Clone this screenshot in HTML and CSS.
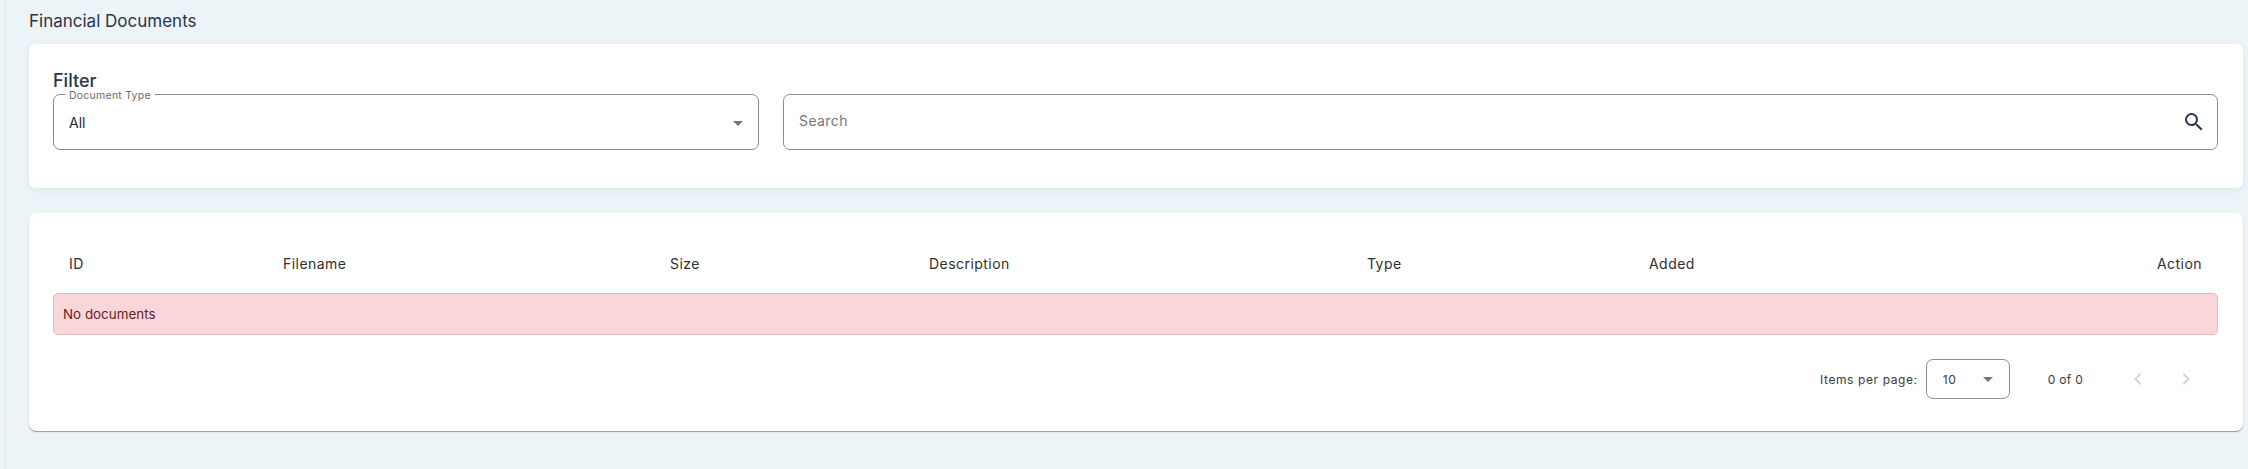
FILE: index.html
```html
<!DOCTYPE html>
<html lang="en">
<head>
<meta charset="utf-8">
<title>Financial Documents</title>
<link rel="stylesheet" href="styles.css">
</head>
<body>
<main class="page">
  <h1 class="page-title">Financial Documents</h1>
  <section class="card filter-card">
    <h2 class="filter-title">Filter</h2>
    <div class="filter-row">
      <div class="field field-type">
        <span class="field-label">Document Type</span>
        <span class="field-value">All</span>
        <span class="caret"></span>
      </div>
      <div class="field field-search">
        <span class="placeholder">Search</span>
        <svg class="search-icon" viewBox="0 0 24 24" width="24" height="24" aria-hidden="true"><path d="M15.5 14h-.79l-.28-.27A6.47 6.47 0 0 0 16 9.5 6.5 6.5 0 1 0 9.5 16c1.61 0 3.09-.59 4.23-1.57l.27.28v.79l5 4.99L20.49 19l-4.99-5zm-6 0C7.01 14 5 11.99 5 9.5S7.01 5 9.5 5 14 7.01 14 9.5 11.99 14 9.5 14z"/></svg>
      </div>
    </div>
  </section>
  <section class="card table-card">
    <div class="table-head">
      <span>ID</span>
      <span>Filename</span>
      <span>Size</span>
      <span>Description</span>
      <span>Type</span>
      <span>Added</span>
      <span class="head-action">Action</span>
    </div>
    <div class="alert">No documents</div>
    <div class="paginator">
      <span class="per-page">Items per page:</span>
      <div class="page-select"><span>10</span><span class="caret"></span></div>
      <span class="range">0 of 0</span>
      <div class="page-nav">
        <svg viewBox="0 0 24 24" width="24" height="24" aria-hidden="true"><path d="M15.41 7.41 14 6l-6 6 6 6 1.41-1.41L10.83 12z"/></svg>
        <svg viewBox="0 0 24 24" width="24" height="24" aria-hidden="true"><path d="M10 6 8.59 7.41 13.17 12l-4.58 4.59L10 18l6-6z"/></svg>
      </div>
    </div>
  </section>
</main>
</body>
</html>
```

FILE: styles.css
```css
* { box-sizing: border-box; }
html, body { margin: 0; height: 100%; }
body {
  background: #ecf4f8;
  font-family: "Inter", "Open Sans", sans-serif;
  color: #2a3547;
  overflow: hidden;
}
.page {
  height: 469px;
  margin-left: 5px;
  padding: 0 5px 0 23px;
  border-left: 1px solid #dfe5e9;
}
.page-title {
  margin: 0;
  height: 44px;
  padding-top: 10px;
  font-size: 17px;
  line-height: 22px;
  font-weight: 400;
  color: #2a3547;
}
.card {
  background: #fff;
  border-radius: 7px;
}
.filter-card {
  height: 144px;
  padding: 26px 25px 0 24px;
  box-shadow: 0 2px 6px rgba(145, 158, 171, 0.14);
}
.filter-title {
  margin: 0;
  height: 24px;
  font-size: 18px;
  line-height: 22px;
  font-weight: 500;
  color: #2a3547;
}
.filter-row {
  display: flex;
  gap: 24px;
}
.field {
  position: relative;
  height: 56px;
  display: flex;
  align-items: center;
  border: 1px solid #8c8c8c;
  border-radius: 7px;
  padding: 0 15px;
  font-size: 14px;
}
.field-type { width: 706px; }
.field-search { flex: 1; justify-content: space-between; }
.field-label {
  position: absolute;
  left: 11px;
  top: -6px;
  padding: 0 4px;
  background: #fff;
  font-size: 10.5px;
  line-height: 13px;
  letter-spacing: 0.25px;
  color: #6b6b6b;
}
.field-value { color: #1f2937; flex: 1; }
.placeholder { color: #757575; font-size: 14px; letter-spacing: 0.4px; margin-top: -4px; }
.caret {
  display: block;
  width: 0;
  height: 0;
  border-left: 5px solid transparent;
  border-right: 5px solid transparent;
  border-top: 5px solid #757575;
}
.field-type .caret { margin: 2px 0 0 0; }
.search-icon { fill: #2a3547; margin-right: -4px; }
.table-card {
  height: 218px;
  margin-top: 25px;
  padding: 0 25px 0 24px;
  box-shadow: 0 1px 1px rgba(60, 60, 60, 0.5);
}
.table-head {
  height: 80px;
  padding: 31px 16px 0 16px;
  display: grid;
  grid-template-columns: 214px 387px 259px 438px 282px 1fr auto;
  font-size: 14px;
  line-height: 40px;
  letter-spacing: 0.45px;
  color: #2f2f2f;
}
.head-action { text-align: right; }
.alert {
  height: 42px;
  padding: 0 9px 1px;
  display: flex;
  align-items: center;
  background: #f9d6da;
  border: 1px solid #eab6bd;
  border-radius: 5px;
  font-size: 13.4px;
  color: #6d1a24;
}
.paginator {
  display: flex;
  align-items: center;
  height: 40px;
  margin-top: 24px;
  font-size: 12px;
  letter-spacing: 0.6px;
  color: #3a3a3a;
}
.per-page { margin-left: auto; }
.page-select {
  width: 84px;
  height: 40px;
  margin-left: 8px;
  padding: 0 16px;
  display: flex;
  align-items: center;
  justify-content: space-between;
  border: 1px solid #8c8c8c;
  border-radius: 7px;
}
.range { margin-left: 38px; letter-spacing: 0.3px; }
.page-nav {
  display: flex;
  gap: 24px;
  margin-left: 43px;
  margin-right: 20px;
}
.page-nav svg { fill: #d5d5d5; }
```
